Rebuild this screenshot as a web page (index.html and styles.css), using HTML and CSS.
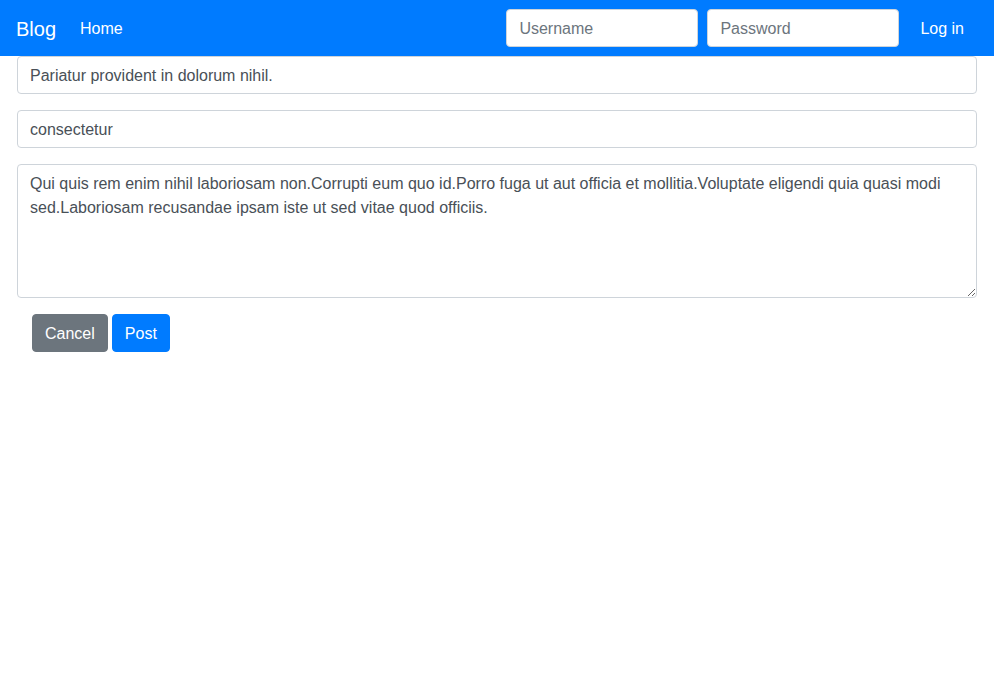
FILE: index.html
```html
<!DOCTYPE html>
<html lang="en">
<head>
<meta charset="utf-8">
<title>Blog</title>
<link rel="stylesheet" href="styles.css">
</head>
<body>
<nav class="navbar">
  <a class="brand" href="#">Blog</a>
  <a class="nav-link" href="#">Home</a>
  <form class="login">
    <input class="nav-input" type="text" placeholder="Username">
    <input class="nav-input" type="password" placeholder="Password">
    <button class="login-btn" type="button">Log in</button>
  </form>
</nav>
<main class="container">
  <form class="post-form">
    <div class="form-group">
      <input class="form-control" type="text" value="Pariatur provident in dolorum nihil.">
    </div>
    <div class="form-group">
      <input class="form-control" type="text" value="consectetur">
    </div>
    <div class="form-group">
      <textarea class="form-control textarea" rows="5">Qui quis rem enim nihil laboriosam non.Corrupti eum quo id.Porro fuga ut aut officia et mollitia.Voluptate eligendi quia quasi modi sed.Laboriosam recusandae ipsam iste ut sed vitae quod officiis.</textarea>
    </div>
    <div class="actions">
      <button class="btn btn-secondary" type="button">Cancel</button>
      <button class="btn btn-primary" type="button">Post</button>
    </div>
  </form>
</main>
</body>
</html>
```
FILE: styles.css
```css
* { box-sizing: border-box; }
body {
  margin: 0;
  font-family: "Liberation Sans", Arial, sans-serif;
  font-size: 16px;
  line-height: 1.5;
  color: #212529;
  background: #fff;
}
.navbar {
  display: flex;
  align-items: center;
  height: 56px;
  padding: 8px 16px;
  background: #007bff;
}
.brand {
  color: #fff;
  font-size: 20px;
  line-height: 30px;
  padding-top: 2px;
  text-decoration: none;
  margin-right: 16px;
}
.nav-link {
  color: #fff;
  text-decoration: none;
  padding: 10px 8px 8px;
}
.login {
  margin-left: auto;
  display: flex;
  align-items: center;
  gap: 9px;
}
.nav-input {
  width: 192px;
  height: 38px;
  padding: 7px 12px 5px;
  font: inherit;
  color: #495057;
  background: #fff;
  border: 1px solid #ced4da;
  border-radius: 4px;
  outline: none;
}
.nav-input::placeholder { color: #6c757d; }
.login-btn {
  font: inherit;
  color: #fff;
  background: transparent;
  border: 1px solid transparent;
  padding: 8px 13px 6px 11px;
  cursor: pointer;
}
.container {
  width: 960px;
  margin: 0 auto;
}
.form-group { margin-bottom: 16px; }
.form-control {
  display: block;
  width: 100%;
  height: 38px;
  padding: 7px 12px 5px;
  font: inherit;
  line-height: 24px;
  color: #495057;
  background: #fff;
  border: 1px solid #ced4da;
  border-radius: 4px;
  outline: none;
}
.textarea {
  height: 134px;
  resize: vertical;
}
.actions {
  display: flex;
  gap: 4px;
  padding-left: 15px;
}
.btn {
  font: inherit;
  line-height: 24px;
  height: 38px;
  padding: 7px 12px 5px;
  color: #fff;
  border: 1px solid transparent;
  border-radius: 4px;
  cursor: pointer;
}
.btn-secondary { background: #6c757d; border-color: #6c757d; }
.btn-primary { background: #007bff; border-color: #007bff; }
```
